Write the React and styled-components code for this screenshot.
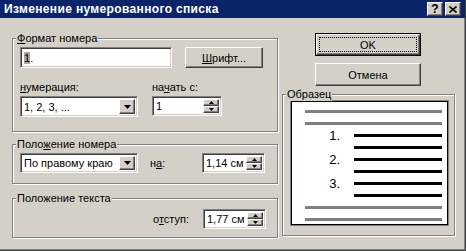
import { Fragment } from 'react';
import styled, { createGlobalStyle } from 'styled-components';

const Global = createGlobalStyle`
    * { box-sizing: border-box; }
    body {
        margin: 0;
        background: #d4d0c8;
        font-family: "Liberation Sans", Arial, sans-serif;
        font-size: 11px;
        color: #000;
    }
`;

const Window = styled.div`
    width: 466px;
    height: 251px;
    background: #d4d0c8;
    display: flex;
    flex-direction: column;
    border-right: 1px solid #404040;
    border-bottom: 1px solid #404040;
    box-shadow: inset -1px -1px 0 #808080;
    overflow: hidden;
`;

const TitleBar = styled.div`
    height: 18px;
    background: #0a246a;
    display: flex;
    align-items: center;
    padding: 0 4px 0 4px;

    h1 {
        flex: 1;
        margin: 0;
        color: #fff;
        font-size: 12px;
        font-weight: bold;
        letter-spacing: 0.35px;
    }
`;

const raised = `
    border: 1px solid;
    border-color: #fff #404040 #404040 #fff;
    box-shadow: inset -1px -1px 0 #808080, inset 1px 1px 0 #d4d0c8;
    background: #d4d0c8;
`;

const sunken = `
    border: 1px solid;
    border-color: #808080 #fff #fff #808080;
    box-shadow: inset 1px 1px 0 #404040, inset -1px -1px 0 #d4d0c8;
    background: #fff;
`;

const CaptionButton = styled.div`
    ${raised}
    width: 16px;
    height: 14px;
    margin-left: ${p => p.$gap || 0}px;
    display: flex;
    align-items: center;
    justify-content: center;
    font-weight: bold;
    font-size: 12px;
    line-height: 1;
`;

const Body = styled.div`
    flex: 1;
    display: flex;
    padding-left: 12px;
    gap: 4px;
`;

const LeftCol = styled.div`
    width: 266px;
    display: flex;
    flex-direction: column;
`;

const RightCol = styled.div`
    width: 173px;
    display: flex;
    flex-direction: column;
    padding-top: 15px;
`;

const Group = styled.div`
    position: relative;
    margin-top: ${p => p.$top}px;
    height: ${p => p.$h}px;
    border: 1px solid #808080;
    box-shadow: 1px 1px 0 #fff, inset 1px 1px 0 #fff;
    padding: ${p => p.$pad || '8px 7px'};
`;

const Legend = styled.span`
    position: absolute;
    top: -7px;
    left: 3px;
    padding: 0 1px;
    line-height: 13px;
    background: #d4d0c8;
`;

const Row = styled.div`
    display: flex;
    align-items: ${p => p.$align || 'flex-start'};
    gap: ${p => p.$gap || 0}px;
    margin-top: ${p => p.$top || 0}px;
    justify-content: ${p => p.$justify || 'flex-start'};
`;

const Field = styled.div`
    display: flex;
    flex-direction: column;
    gap: 2px;
    width: ${p => p.$w}px;

    label { line-height: 13px; }
`;

const Caption = styled.span`
    width: ${p => p.$w || 'auto'};
    margin-left: ${p => p.$left || 0}px;
`;

const TextBox = styled.div`
    ${sunken}
    width: ${p => p.$w}px;
    height: ${p => p.$h || 21}px;
    display: flex;
    align-items: center;
    padding-left: 3px;

    mark {
        background: #a6a6a6;
        color: #000;
    }
`;

const Select = styled.div`
    ${sunken}
    width: ${p => p.$w}px;
    height: ${p => p.$h || 21}px;
    display: flex;
    align-items: center;
    padding: 2px;
    padding-left: 3px;

    span { flex: 1; }
`;

const DropButton = styled.div`
    ${raised}
    width: 16px;
    height: 100%;
    display: flex;
    align-items: center;
    justify-content: center;
`;

const Spinner = styled.div`
    ${sunken}
    width: ${p => p.$w}px;
    height: ${p => p.$h || 20}px;
    margin-right: ${p => p.$right || 0}px;
    display: flex;
    align-items: center;
    padding: 2px;
    padding-left: 3px;

    span { flex: 1; }
`;

const SpinButtons = styled.div`
    width: 16px;
    height: 100%;
    display: flex;
    flex-direction: column;
`;

const SpinHalf = styled.div`
    ${raised}
    flex: 1;
    display: flex;
    align-items: center;
    justify-content: center;
`;

const Button = styled.div`
    ${raised}
    width: ${p => p.$w}px;
    height: ${p => p.$h || 21}px;
    margin-top: ${p => p.$top || 0}px;
    margin-left: ${p => p.$left || 0}px;
    display: flex;
    align-items: center;
    justify-content: center;
`;

const DefaultButton = styled.div`
    width: 106px;
    height: 23px;
    margin-left: 33px;
    border: 1px solid #000;
    display: flex;

    > div {
        ${raised}
        flex: 1;
        display: flex;
        padding: 3px;
    }

    span {
        flex: 1;
        display: flex;
        align-items: center;
        justify-content: center;
        outline: 1px dotted #000;
    }
`;

const Preview = styled.div`
    border: 1px solid #808080;
    margin-top: -1px;
    height: 126px;
    display: flex;

    > div {
        flex: 1;
        background: #fff;
        border: 1px solid #000;
        display: flex;
        flex-direction: column;
        gap: 9px;
        padding: 8px 5px 0 13px;
    }
`;

const PreviewLine = styled.div`
    height: 3px;
    display: flex;
    align-items: center;
    padding-left: ${p => (p.$indent ? 49 : 0)}px;

    i {
        flex: 1;
        height: 3px;
        background: ${p => (p.$dark ? '#000' : '#808080')};
    }

    b {
        width: 35px;
        margin-right: 14px;
        text-align: right;
        font-weight: normal;
        font-size: 13px;
        line-height: 3px;
    }
`;

const U = styled.u`
    text-decoration: underline;
`;

function Arrow() {
    return (
        <svg width="7" height="4" viewBox="0 0 7 4">
            <polygon points="0,0 7,0 3.5,4" fill="#000" />
        </svg>
    );
}

function SmallArrow({ up }) {
    return (
        <svg width="5" height="3" viewBox="0 0 5 3">
            <polygon points={up ? '2.5,0 5,3 0,3' : '0,0 5,0 2.5,3'} fill="#000" />
        </svg>
    );
}

function Spin({ value, w, h, right }) {
    return (
        <Spinner $w={w} $h={h} $right={right}>
            <span>{value}</span>
            <SpinButtons>
                <SpinHalf><SmallArrow up /></SpinHalf>
                <SpinHalf><SmallArrow /></SpinHalf>
            </SpinButtons>
        </Spinner>
    );
}

function Combo({ value, w, h }) {
    return (
        <Select $w={w} $h={h}>
            <span>{value}</span>
            <DropButton><Arrow /></DropButton>
        </Select>
    );
}

export default function App() {
    return (
        <Window>
            <Global />
            <TitleBar>
                <h1>Изменение нумерованного списка</h1>
                <CaptionButton>?</CaptionButton>
                <CaptionButton $gap={2}>
                    <svg width="8" height="7" viewBox="0 0 8 7">
                        <path d="M0.5 0.5 L7.5 6.5 M7.5 0.5 L0.5 6.5" stroke="#000" strokeWidth="1.6" />
                    </svg>
                </CaptionButton>
            </TitleBar>
            <Body>
                <LeftCol>
                    <Group $top={20} $h={94}>
                        <Legend><U>Ф</U>ормат номера</Legend>
                        <Row $gap={13}>
                            <TextBox $w={152}><mark>1</mark>.</TextBox>
                            <Button $w={78}><span><U>Ш</U>рифт...</span></Button>
                        </Row>
                        <Row $gap={14} $top={13}>
                            <Field $w={118}>
                                <label><U>н</U>умерация:</label>
                                <Combo value="1, 2, 3, ..." w={118} />
                            </Field>
                            <Field $w={70}>
                                <label>на<U>ч</U>ать с:</label>
                                <Spin value="1" w={70} />
                            </Field>
                        </Row>
                    </Group>
                    <Group $top={12} $h={40}>
                        <Legend>Поло<U>ж</U>ение номера</Legend>
                        <Row $align="center">
                            <Combo value="По правому краю" w={118} h={20} />
                            <Caption $left={12} $w="52px">н<U>а</U>:</Caption>
                            <Spin value="1,14 см" w={63} />
                        </Row>
                    </Group>
                    <Group $top={14} $h={40} $pad="10px 7px">
                        <Legend>Положение текста</Legend>
                        <Row $align="center" $justify="flex-end" $gap={14}>
                            <Caption>о<U>т</U>ступ:</Caption>
                            <Spin value="1,77 см" w={63} right={4} />
                        </Row>
                    </Group>
                </LeftCol>
                <RightCol>
                    <DefaultButton>
                        <div><span>OK</span></div>
                    </DefaultButton>
                    <Button $w={106} $h={23} $top={7} $left={33}>Отмена</Button>
                    <Group $top={8} $h={142} $pad="6px 5px 0 7px">
                        <Legend>Образец</Legend>
                        <Preview>
                            <div>
                                <PreviewLine><i /></PreviewLine>
                                <PreviewLine><i /></PreviewLine>
                                {[1, 2, 3].map(n => (
                                    <Fragment key={n}>
                                        <PreviewLine $dark><b>{n}.</b><i /></PreviewLine>
                                        <PreviewLine $dark $indent><i /></PreviewLine>
                                    </Fragment>
                                ))}
                                <PreviewLine><i /></PreviewLine>
                                <PreviewLine><i /></PreviewLine>
                            </div>
                        </Preview>
                    </Group>
                </RightCol>
            </Body>
        </Window>
    );
}
